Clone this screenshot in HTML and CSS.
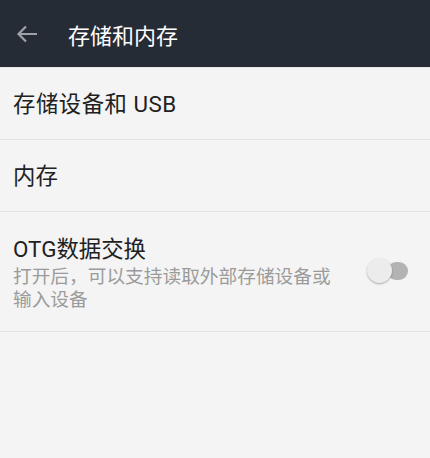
FILE: index.html
```html
<!DOCTYPE html>
<html>
  <head>
    <meta charset="utf-8">
    <title>存储和内存</title>
    <link rel="stylesheet" href="styles.css">
  </head>
  <body>
    <div class="barre">
      <svg class="retour" width="22" height="18" viewBox="0 0 22 18">
        <path d="M21 9H2.5M10 1.5L2.5 9L10 16.5" fill="none" stroke="#9ea1a6" stroke-width="2.2"/>
      </svg>
      <span class="titre">存储和内存</span>
    </div>

    <div class="liste">
      <div class="ligne">
        <span class="nom large">存储设备和 USB</span>
      </div>
      <div class="ligne">
        <span class="nom">内存</span>
      </div>
      <div class="ligne double">
        <div class="textes">
          <div class="nom">OTG数据交换</div>
          <div class="resume">打开后，可以支持读取外部存储设备或输入设备</div>
        </div>
        <div class="interrupteur">
          <div class="piste"></div>
          <div class="bouton"></div>
        </div>
      </div>
    </div>
  </body>
</html>
```

FILE: styles.css
```css
body {
  margin: 0;
  background-color: #f4f4f4;
  font-family: Roboto, "Noto Sans CJK SC", sans-serif;
  color: #212121;
}

.barre {
  height: 67px;
  background-color: #262c35;
  display: flex;
  align-items: center;
}

.retour {
  margin-left: 16px;
  margin-right: 30px;
}

.titre {
  color: #ffffff;
  font-size: 22px;
}

.ligne {
  height: 71px;
  border-bottom: 1px solid #e3e3e3;
  display: flex;
  align-items: center;
  padding-left: 13px;
}

.barre + .liste .ligne:first-child {
  border-top: 1px solid #e8e8e8;
}

.nom {
  font-size: 22.4px;
  line-height: 28px;
}

.nom.large {
  letter-spacing: 0.5px;
}

.ligne.double {
  height: 119px;
  align-items: flex-start;
}

.textes {
  width: 334px;
  padding-top: 23px;
}

.resume {
  margin-top: 3px;
  font-size: 18.7px;
  line-height: 23px;
  color: #9b9b9b;
}

.interrupteur {
  position: relative;
  width: 44px;
  height: 26px;
  margin-top: 46px;
  margin-left: 20px;
}

.piste {
  position: absolute;
  left: 20px;
  top: 4px;
  width: 21px;
  height: 18px;
  border-radius: 9px;
  background-color: #b3b3b3;
}

.bouton {
  position: absolute;
  left: 0;
  top: 0;
  width: 25px;
  height: 25px;
  border-radius: 50%;
  background-color: #ececec;
  box-shadow: 0 1px 2px rgba(0, 0, 0, 0.3);
}
```
